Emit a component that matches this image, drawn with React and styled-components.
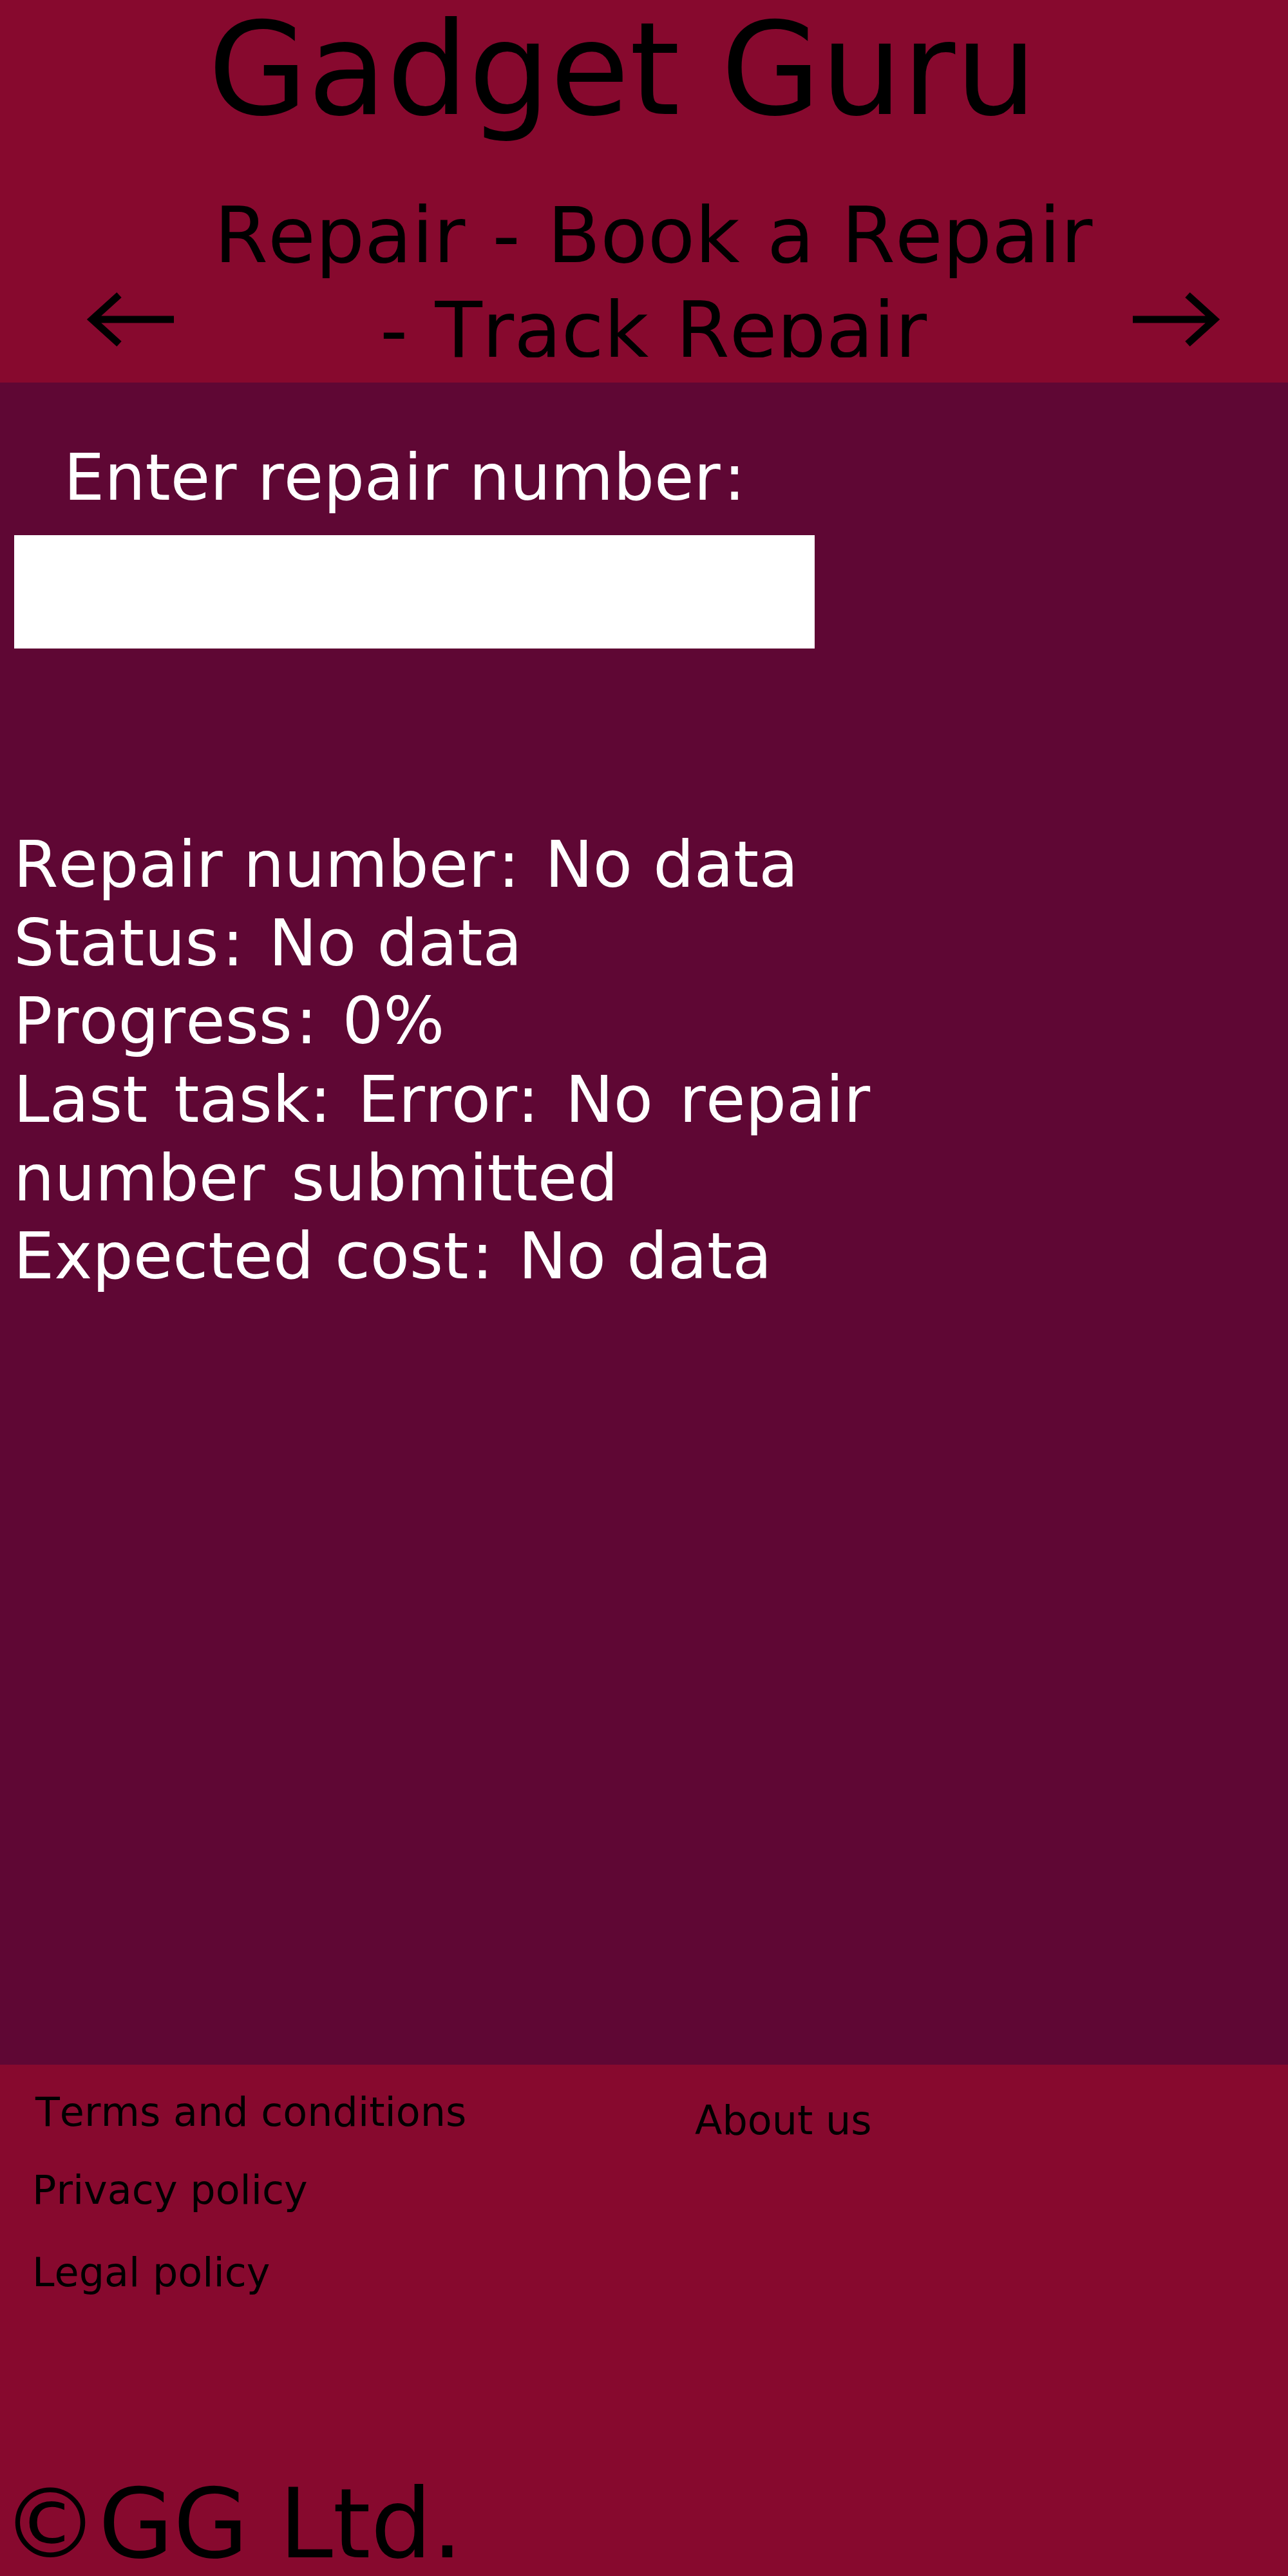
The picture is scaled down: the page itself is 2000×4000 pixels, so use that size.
import React from "react";
import styled, { createGlobalStyle } from "styled-components";

const GlobalStyle = createGlobalStyle`
  html, body {
    margin: 0;
    padding: 0;
  }
  body {
    font-family: "DejaVu Sans", Verdana, sans-serif;
    font-kerning: none;
    font-feature-settings: "kern" 0;
    background: #87092e;
  }
`;

const Header = styled.header`
  background: #87092e;
  padding: 8px 0 39px;
  color: #000;
`;

const Title = styled.h1`
  margin: 0;
  font-size: 200px;
  line-height: 200px;
  font-weight: normal;
  text-align: center;
  padding-right: 67px;
`;

const Nav = styled.nav`
  display: flex;
  align-items: flex-start;
  gap: 50px;
  margin-top: 83.5px;
  height: 263.5px;
  overflow: hidden;
  padding: 0 104px 0 133px;
`;

const ArrowLink = styled.a`
  flex: none;
  display: block;
  width: 140px;
  height: 100px;
  margin-top: 154.5px;
  color: #000;
  svg {
    display: block;
  }
`;

const Subtitle = styled.h2`
  flex: 1;
  margin: 0;
  font-size: 120px;
  line-height: 147.6px;
  font-weight: normal;
  text-align: center;
  word-spacing: 0.034em;
`;

const Main = styled.main`
  background: #5f0734;
  height: 2612px;
  box-sizing: border-box;
  padding: 87.3px 0 0 21px;
  color: #fff;
  word-spacing: 0.034em;
`;

const Colon = styled.span`
  padding: 0 0.066em 0 0.05em;
`;

const Label = styled.label`
  display: block;
  font-size: 100px;
  line-height: 121.6px;
  padding-left: 78px;
`;

const RepairInput = styled.input`
  display: block;
  box-sizing: border-box;
  margin: 28px 0 0 1px;
  width: 1243px;
  height: 176px;
  border: none;
  outline: none;
  background: #fff;
  font-family: inherit;
  font-size: 80px;
  padding: 0 20px;
`;

const Details = styled.div`
  margin-top: 275.3px;
  width: 1500px;
  font-size: 100px;
  line-height: 121.6px;
`;

const DetailLine = styled.p`
  margin: 0;
  word-spacing: ${(p) => (p.$wide ? "0.092em" : "inherit")};
`;

const Footer = styled.footer`
  background: #87092e;
  padding-top: 36.5px;
  color: #000;
`;

const FooterColumns = styled.div`
  display: grid;
  grid-template-columns: 1029px auto;
  padding-left: 50px;
  align-items: start;
`;

const LinkList = styled.div`
  display: flex;
  flex-direction: column;
  align-items: flex-start;
`;

const FooterLink = styled.a`
  display: block;
  font-size: 62px;
  line-height: normal;
  color: #000;
  text-decoration: none;
  margin-top: ${(p) => p.$mt || 0}px;
  padding-left: ${(p) => p.$indent || 0}px;
`;

const Copyright = styled.p`
  margin: 267.3px 0 0;
  padding-left: 3px;
  font-size: 150px;
  line-height: normal;
`;

function withColons(text) {
  const parts = text.split(":");
  return parts.map((part, i) => (
    <React.Fragment key={i}>
      {part}
      {i < parts.length - 1 && <Colon>:</Colon>}
    </React.Fragment>
  ));
}

function Arrow({ dir }) {
  const d =
    dir === "left"
      ? "M52 12 L10 50 L52 88 M10 50 L137 50"
      : "M88 12 L130 50 L88 88 M130 50 L3 50";
  return (
    <svg width="140" height="100" viewBox="0 0 140 100" overflow="visible">
      <path
        d={d}
        fill="none"
        stroke="currentColor"
        strokeWidth="11"
        strokeLinejoin="miter"
        strokeLinecap="butt"
      />
    </svg>
  );
}

const details = [
  { text: "Repair number: No data" },
  { text: "Status: No data" },
  { text: "Progress: 0%" },
  { text: "Last task: Error: No repair number submitted", wraps: true },
  { text: "Expected cost: No data" },
];

export default function App() {
  return (
    <>
      <GlobalStyle />
      <Header>
        <Title>Gadget Guru</Title>
        <Nav>
          <ArrowLink href="#" aria-label="Previous">
            <Arrow dir="left" />
          </ArrowLink>
          <Subtitle>Repair - Book a Repair - Track Repair</Subtitle>
          <ArrowLink href="#" aria-label="Next">
            <Arrow dir="right" />
          </ArrowLink>
        </Nav>
      </Header>
      <Main>
        <Label htmlFor="repair-number">{withColons("Enter repair number:")}</Label>
        <RepairInput id="repair-number" type="text" />
        <Details>
          {details.map(({ text, wraps }) => (
            <DetailLine key={text} $wide={wraps}>
              {wraps ? text : withColons(text)}
            </DetailLine>
          ))}
        </Details>
      </Main>
      <Footer>
        <FooterColumns>
          <LinkList>
            <FooterLink href="#" $indent={5}>
              Terms and conditions
            </FooterLink>
            <FooterLink href="#" $mt={48.8}>
              Privacy policy
            </FooterLink>
            <FooterLink href="#" $mt={54.8}>
              Legal policy
            </FooterLink>
          </LinkList>
          <LinkList>
            <FooterLink href="#" $mt={13.3}>
              About us
            </FooterLink>
          </LinkList>
        </FooterColumns>
        <Copyright>©GG Ltd.</Copyright>
      </Footer>
    </>
  );
}
